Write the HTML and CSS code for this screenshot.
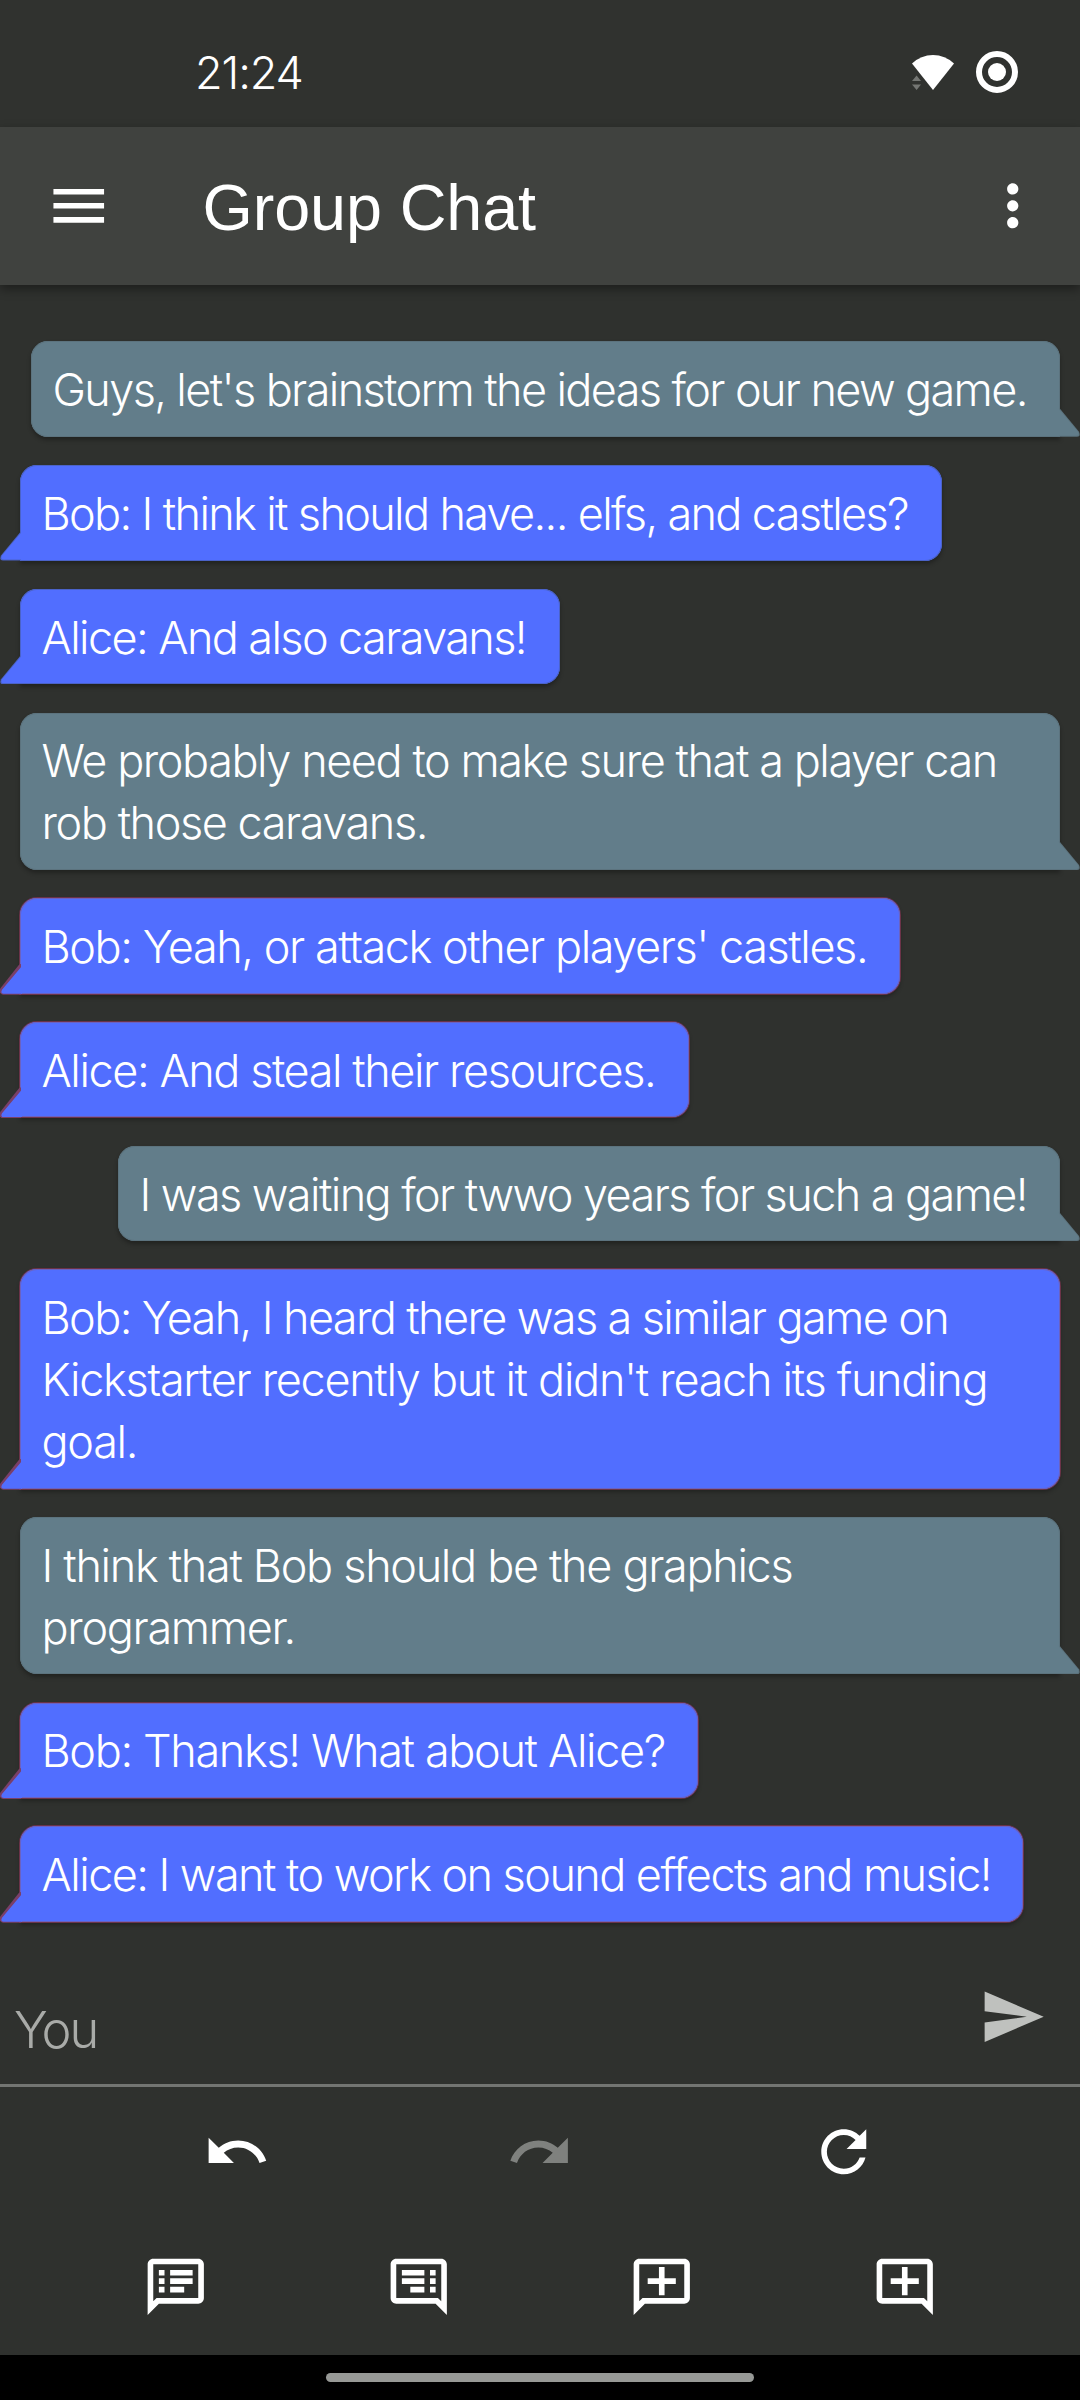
FILE: index.html
```html
<!DOCTYPE html>
<html lang="en">
<head>
<meta charset="utf-8">
<title>Group Chat</title>
<link rel="stylesheet" href="styles.css">
</head>
<body>
<header class="status">
  <span class="clock">21:24</span>
  <svg class="status-icons" viewBox="0 0 106 50" width="106" height="50">
    <path fill="#fff" d="M0 16.500Q9 8 21 8Q33 8 42 16.500L21 43Z"/>
    <path fill="#747673" d="M0 34L4.600 28.500L9 34ZM0 37.500H9L4.600 43Z"/>
    <circle cx="85" cy="25" r="18" fill="none" stroke="#fff" stroke-width="6"/>
    <circle cx="85" cy="25" r="9" fill="#fff"/>
  </svg>
</header>
<div class="appbar">
  <svg class="icon" viewBox="0 0 24 24"><path d="M3 18h18v-2H3v2zm0-5h18v-2H3v2zm0-7v2h18V6H3z"/></svg>
  <h1 class="title">Group Chat</h1>
  <svg class="icon" viewBox="0 0 24 24"><path d="M12 8c1.100 0 2-.9 2-2s-.9-2-2-2-2 .9-2 2 .9 2 2 2zm0 2c-1.100 0-2 .9-2 2s.9 2 2 2 2-.9 2-2-.9-2-2-2zm0 6c-1.100 0-2 .9-2 2s.9 2 2 2 2-.9 2-2-.9-2-2-2z"/></svg>
</div>
<main class="chat">
  <div class="msg me m1">Guys, let's brainstorm the ideas for our new game.</div>
  <div class="msg them m2">Bob: I think it should have... elfs, and castles?</div>
  <div class="msg them m3">Alice: And also caravans!</div>
  <div class="msg me m4">We probably need to make sure that a player can<br>rob those caravans.</div>
  <div class="msg them edge m5">Bob: Yeah, or attack other players' castles.</div>
  <div class="msg them edge m6">Alice: And steal their resources.</div>
  <div class="msg me m7">I was waiting for twwo years for such a game!</div>
  <div class="msg them edge m8"><span class="tight">Bob: Yeah, I heard there was a similar game on</span><br>Kickstarter recently but it didn't reach its funding<br>goal.</div>
  <div class="msg me m9">I think that Bob should be the graphics<br>programmer.</div>
  <div class="msg them edge m10">Bob: Thanks! What about Alice?</div>
  <div class="msg them edge m11">Alice: I want to work on sound effects and music!</div>
</main>
<div class="compose">
  <span class="hint">You</span>
  <svg class="icon send" viewBox="0 0 24 24"><path d="M2.010 21L23 12 2.010 3 2 10l15 2-15 2z"/></svg>
</div>
<div class="tools three">
  <svg class="icon" viewBox="0 0 24 24"><path d="M12.500 8c-2.650 0-5.050.99-6.900 2.600L2 7v9h9l-3.620-3.620c1.390-1.160 3.160-1.880 5.120-1.880 3.540 0 6.550 2.310 7.600 5.500l2.370-.78C21.080 11.030 17.150 8 12.500 8z"/></svg>
  <svg class="icon off" viewBox="0 0 24 24"><path d="M18.400 10.600C16.550 8.990 14.150 8 11.500 8c-4.650 0-8.580 3.030-9.960 7.220L3.900 16c1.050-3.190 4.050-5.500 7.600-5.500 1.950 0 3.730.72 5.120 1.880L13 16h9V7l-3.600 3.600z"/></svg>
  <svg class="icon" viewBox="0 0 24 24"><path d="M17.650 6.350C16.200 4.900 14.210 4 12 4c-4.420 0-7.990 3.580-7.990 8s3.570 8 7.990 8c3.730 0 6.840-2.550 7.730-6h-2.080c-.82 2.330-3.040 4-5.650 4-3.310 0-6-2.690-6-6s2.690-6 6-6c1.660 0 3.140.69 4.220 1.780L13 11h7V4l-2.350 2.350z"/></svg>
</div>
<div class="tools four">
  <svg class="icon" viewBox="0 0 24 24"><path d="M4 4h16v12H5.170L4 17.170V4m0-2c-1.100 0-1.990.9-1.990 2L2 22l4-4h14c1.100 0 2-.9 2-2V4c0-1.100-.9-2-2-2H4zM6 12h2v2H6zM6 9h2v2H6zM6 6h2v2H6zM10 12h5v2h-5zM10 9h8v2h-8zM10 6h8v2h-8z"/></svg>
  <svg class="icon flip" viewBox="0 0 24 24"><path d="M4 4h16v12H5.170L4 17.170V4m0-2c-1.100 0-1.990.9-1.990 2L2 22l4-4h14c1.100 0 2-.9 2-2V4c0-1.100-.9-2-2-2H4zM6 12h2v2H6zM6 9h2v2H6zM6 6h2v2H6zM10 12h5v2h-5zM10 9h8v2h-8zM10 6h8v2h-8z"/></svg>
  <svg class="icon" viewBox="0 0 24 24"><path d="M4 4h16v12H5.170L4 17.170V4m0-2c-1.100 0-1.990.9-1.990 2L2 22l4-4h14c1.100 0 2-.9 2-2V4c0-1.100-.9-2-2-2H4zM11 5h2v4h4v2h-4v4h-2v-4H7V9h4z"/></svg>
  <svg class="icon flip" viewBox="0 0 24 24"><path d="M4 4h16v12H5.170L4 17.170V4m0-2c-1.100 0-1.990.9-1.990 2L2 22l4-4h14c1.100 0 2-.9 2-2V4c0-1.100-.9-2-2-2H4zM11 5h2v4h4v2h-4v4h-2v-4H7V9h4z"/></svg>
</div>
<footer class="nav"><span class="pill"></span></footer>
</body>
</html>
```
FILE: styles.css
```css
* { box-sizing: border-box; }
body {
  margin: 0;
  width: 1080px;
  height: 2400px;
  overflow: hidden;
  display: flex;
  flex-direction: column;
  background: #2f312e;
  color: #fff;
  font-family: Inter, "Liberation Sans", sans-serif;
  font-weight: 300;
}
.icon { width: 67.5px; height: 67.5px; fill: #fff; flex: none; display: block; }
.flip { transform: scaleX(-1); }
.off { fill: #7f817e; }

.status {
  height: 127px;
  flex: none;
  display: flex;
  justify-content: space-between;
  padding: 45px 62px 0 195px;
  background: #30322f;
}
.clock { font-size: 45px; line-height: 56px; letter-spacing: -1.1px; }
.status-icons { margin-top: 2px; }

.appbar {
  height: 157.500px;
  flex: none;
  display: flex;
  align-items: center;
  padding: 0 34px 0 45px;
  background: #40423f;
  box-shadow: 0 4px 10px rgba(0,0,0,.4);
}
.title {
  flex: 1;
  margin: 0 0 0 90px;
  padding-top: 4px;
  font: 400 64.700px/80px "Liberation Sans", sans-serif;
  letter-spacing: -.1px;
}

.chat {
  flex: none;
  height: 1682.500px;
  padding: 56.800px 20px 0;
  display: flex;
  flex-direction: column;
  align-items: flex-start;
  gap: 28.250px;
}
.msg {
  --fill: #516eff;
  --line: #4b63c8;
  position: relative;
  padding: 17.900px 0 15.700px 21.500px;
  font-size: 45px;
  line-height: 61.900px;
  letter-spacing: -1.43px;
  white-space: nowrap;
  border-radius: 17px;
  background: var(--fill);
  box-shadow: inset 0 0 0 1px var(--line), 0 3px 4px rgba(0,0,0,.3);
}
.me { --fill: #627d8a; --line: #5c737e; align-self: flex-end; border-bottom-right-radius: 0; }
.them { border-bottom-left-radius: 0; }
.edge {
  --line: #7a3f68;
  box-shadow: inset 0 0 0 1px #6b62c0, 0 0 0 1px #6b3348, 0 3px 4px rgba(0,0,0,.3);
}
.msg::before, .msg::after {
  content: "";
  position: absolute;
  bottom: 0;
  width: 21px;
  height: 29px;
  background: var(--line);
  clip-path: path("M21 0L20 1L1 24Q-1 29 3 29H21Z");
}
.msg::after {
  bottom: 1px;
  height: 28px;
  background: var(--fill);
  clip-path: path("M22 0L20.500 2L2 24Q0 28 4 28H22Z");
  width: 22px;
}
.edge::before { bottom: -1px; height: 31px; clip-path: path("M21 0L19 1L0 25Q-1 31 3 31H21Z"); }
.edge::after { bottom: 0; }
.them::before, .them::after { left: -20px; }
.me::before, .me::after { right: -20px; transform: scaleX(-1); }

.m1 { width: 1029px; letter-spacing: -1.62px; }
.m2 { width: 922px; letter-spacing: -1.65px; }
.m3 { width: 540px; letter-spacing: -1.6px; }
.m4, .m8, .m9 { width: 1040px; }
.m5 { width: 880px; }
.m6 { width: 669px; }
.m7 { width: 942px; letter-spacing: -1.58px; }
.m8 { letter-spacing: -1.3px; }
.tight { letter-spacing: -1.61px; }
.m9 { letter-spacing: -1.32px; }
.m10 { width: 678px; letter-spacing: -1.35px; }
.m11 { width: 1003px; letter-spacing: -1.56px; }

.compose {
  height: 120px;
  flex: none;
  display: flex;
  justify-content: space-between;
  padding: 16px 34px 0 14px;
  border-bottom: 3px solid #737572;
}
.hint { font-size: 50.600px; line-height: 60px; letter-spacing: -2.2px; margin-top: 17px; color: #a9aba8; }
.send { fill: #bfc1be; }
.tools { height: 130px; flex: none; display: grid; align-items: center; justify-items: center; }
.three { grid-template-columns: repeat(3, 303.750px); padding: 0 84.400px; }
.four { grid-template-columns: repeat(4, 243px); padding: 2px 54px 0; height: 138px; }
.nav { flex: 1; background: #000; display: flex; justify-content: center; padding-top: 18px; }
.pill { width: 428px; height: 9px; border-radius: 5px; background: #979996; }
```
